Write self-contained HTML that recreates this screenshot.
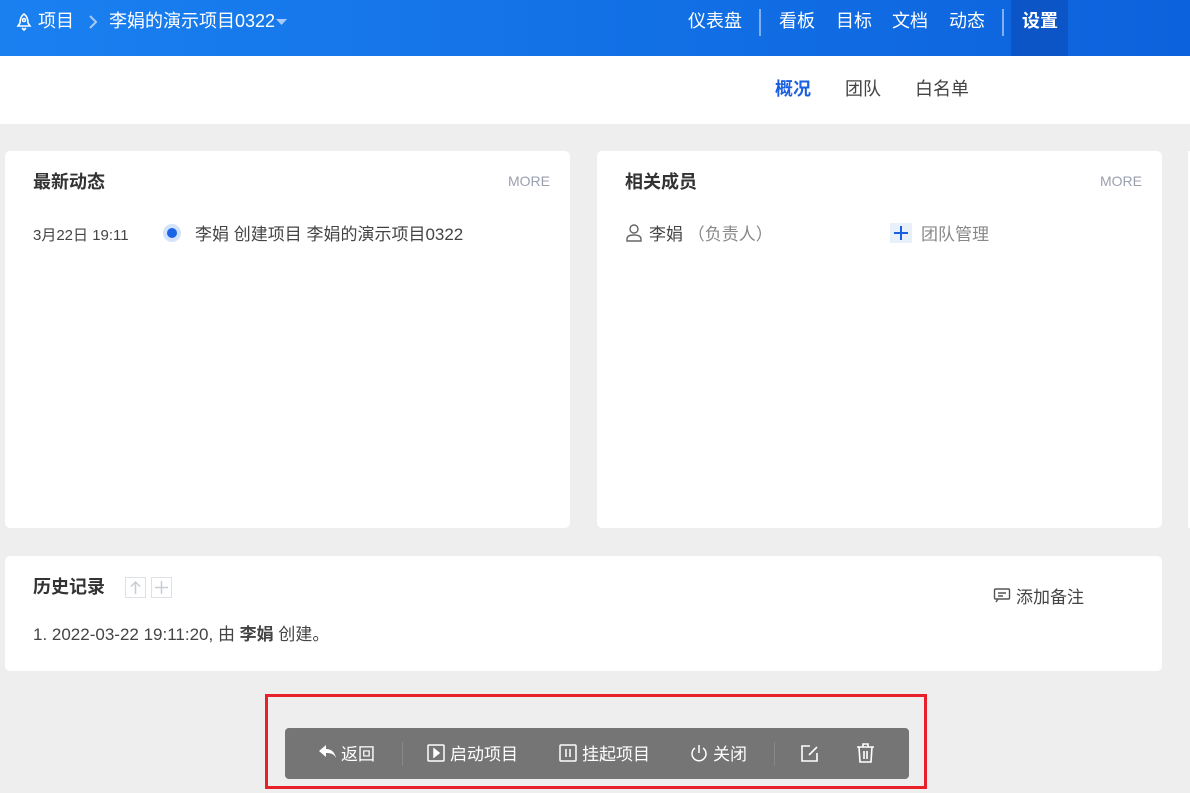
<!DOCTYPE html>
<html><head><meta charset="utf-8"><style>
*{margin:0;padding:0;box-sizing:border-box}
body{width:1190px;height:793px;overflow:hidden;background:#eeeeee;font-family:"Liberation Sans","Noto Sans CJK SC",sans-serif;position:relative;color:#333}
.hdr{position:absolute;left:0;top:0;width:1190px;height:56px;background:linear-gradient(90deg,#1a80f0,#0c62dc)}
.hdr span{position:absolute;top:9px;font-size:18px;color:#fff;line-height:24px}
.sub{position:absolute;left:0;top:56px;width:1190px;height:68px;background:#fff}
.sub span{position:absolute;top:21px;font-size:18px;color:#444;line-height:24px}
.card{position:absolute;background:#fff;border-radius:5px}
.t{position:absolute;font-size:18px;font-weight:bold;color:#333;line-height:24px}
.more{position:absolute;font-size:14px;color:#9aa0ad;line-height:18px}
.a{position:absolute;white-space:nowrap}
</style></head><body>
<div class="hdr">
<svg style="position:absolute;left:16px;top:12px" width="16" height="20" viewBox="0 0 16 20" fill="none" stroke="#fff" stroke-width="1.6"><path d="M8 2C5 4 4 7 4 11l-2 3h12l-2-3c0-4-1-7-4-9z"/><circle cx="8" cy="8" r="1.5"/><path d="M6 16l2 2 2-2"/></svg>
<span style="left:38px">项目</span>
<svg style="position:absolute;left:88px;top:15px" width="10" height="14" fill="none" stroke="#a9c9f6" stroke-width="2"><path d="M2 1l6 6-6 6"/></svg>
<span style="left:109px">李娟的演示项目0322</span>
<svg style="position:absolute;left:276px;top:19px" width="11" height="6"><path d="M0 0h11L5.5 6z" fill="#a9c9f6"/></svg>
<span style="left:688px">仪表盘</span>
<div style="position:absolute;left:759px;top:9px;width:2px;height:27px;background:#7fb0f3"></div>
<span style="left:779px">看板</span>
<span style="left:836px">目标</span>
<span style="left:892px">文档</span>
<span style="left:949px">动态</span>
<div style="position:absolute;left:1002px;top:9px;width:2px;height:27px;background:#7fb0f3"></div>
<div style="position:absolute;left:1011px;top:0;width:57px;height:56px;background:#0b55c6"></div>
<span style="left:1022px;font-weight:bold">设置</span>
</div>
<div class="sub">
<span style="left:775px;color:#1a5fe0;font-weight:bold">概况</span>
<span style="left:845px">团队</span>
<span style="left:915px">白名单</span>
</div>
<div class="card" style="left:5px;top:151px;width:565px;height:377px">
<div class="t" style="left:28px;top:19px">最新动态</div>
<div class="more" style="left:503px;top:21px">MORE</div>
<div class="a" style="left:28px;top:73px;font-size:15px;color:#444">3月22日 19:11</div>
<div style="position:absolute;left:158px;top:73px;width:18px;height:18px;border-radius:50%;background:#d4e3fb"></div>
<div style="position:absolute;left:162px;top:77px;width:10px;height:10px;border-radius:50%;background:#1a64e6"></div>
<div class="a" style="left:190px;top:69px;font-size:17px;color:#444">李娟 创建项目 李娟的演示项目0322</div>
</div>
<div class="card" style="left:597px;top:151px;width:565px;height:377px">
<div class="t" style="left:28px;top:19px">相关成员</div>
<div class="more" style="left:503px;top:21px">MORE</div>
<svg style="position:absolute;left:28px;top:72px" width="18" height="20" fill="none" stroke="#666" stroke-width="1.4"><circle cx="9" cy="6" r="4"/><path d="M2 18v-2c0-3 3-4 7-4s7 1 7 4v2z"/></svg>
<div class="a" style="left:52px;top:69px;font-size:17px;color:#444">李娟 <span style="color:#888">（负责人）</span></div>
<div style="position:absolute;left:293px;top:72px;width:22px;height:20px;background:#e8f0fc"></div>
<svg style="position:absolute;left:295px;top:73px" width="18" height="18" stroke="#1a5fe0" stroke-width="2"><path d="M9 2v14M2 9h14"/></svg>
<div class="a" style="left:324px;top:69px;font-size:17px;color:#888">团队管理</div>
</div>
<div style="position:absolute;left:1188px;top:151px;width:2px;height:377px;background:#fff"></div>
<div class="card" style="left:5px;top:556px;width:1157px;height:115px">
<div class="t" style="left:28px;top:19px">历史记录</div>
<div style="position:absolute;left:120px;top:21px;width:21px;height:21px;border:1px solid #dde0e6"></div>
<svg style="position:absolute;left:121px;top:22px" width="19" height="19" stroke="#c8ccd4" stroke-width="1.5" fill="none"><path d="M9.5 4v12M5 8.5l4.5-4.5 4.5 4.5"/></svg>
<div style="position:absolute;left:146px;top:21px;width:21px;height:21px;border:1px solid #dde0e6"></div>
<svg style="position:absolute;left:147px;top:22px" width="19" height="19" stroke="#c8ccd4" stroke-width="1.5"><path d="M9.5 3v13M3 9.5h13"/></svg>
<div class="a" style="left:28px;top:64px;font-size:17px;color:#444">1. 2022-03-22 19:11:20, 由 <b>李娟</b> 创建。</div>
<svg style="position:absolute;left:988px;top:31px" width="18" height="16" fill="none" stroke="#555" stroke-width="1.4"><rect x="1.5" y="2" width="15" height="10" rx="1"/><path d="M5 6h8M5 9h5M5 12l-2 3"/></svg>
<div class="a" style="left:1011px;top:27px;font-size:17px;color:#444">添加备注</div>
</div>
<div style="position:absolute;left:265px;top:694px;width:662px;height:95px;border:3px solid #e8202a"></div>
<div style="position:absolute;left:285px;top:728px;width:624px;height:51px;background:#757575;border-radius:4px;color:#fff;font-size:17px">
<svg style="position:absolute;left:34px;top:16px" width="18" height="16" fill="#fff"><path d="M7 1L0 7l7 6V9c5 0 8 1 10 5-1-5-4-9-10-9z"/></svg>
<div class="a" style="left:56px;top:12px">返回</div>
<div style="position:absolute;left:117px;top:14px;width:1px;height:24px;background:#888"></div>
<svg style="position:absolute;left:142px;top:16px" width="18" height="18" fill="none" stroke="#fff" stroke-width="1.5"><rect x="1" y="1" width="16" height="16" rx="1"/><path d="M7 5l5 4-5 4z" fill="#fff"/></svg>
<div class="a" style="left:165px;top:12px">启动项目</div>
<svg style="position:absolute;left:274px;top:16px" width="18" height="18" fill="none" stroke="#fff" stroke-width="1.5"><rect x="1" y="1" width="16" height="16" rx="1"/><path d="M7 5v8M11 5v8"/></svg>
<div class="a" style="left:297px;top:12px">挂起项目</div>
<svg style="position:absolute;left:405px;top:15px" width="18" height="20" fill="none" stroke="#fff" stroke-width="1.5"><path d="M9 2v8M5 5a7 7 0 1 0 8 0"/></svg>
<div class="a" style="left:428px;top:12px">关闭</div>
<div style="position:absolute;left:489px;top:14px;width:1px;height:24px;background:#888"></div>
<svg style="position:absolute;left:515px;top:16px" width="19" height="19" fill="none" stroke="#fff" stroke-width="1.6"><path d="M10 2H2v15h15V9M9 11l8-8"/></svg>
<svg style="position:absolute;left:571px;top:15px" width="19" height="20" fill="none" stroke="#fff" stroke-width="1.6"><path d="M1 4h17M7 4V1h5v3M3 4l1 15h11l1-15M8 8v8M11 8v8"/></svg>
</div>
</body></html>
